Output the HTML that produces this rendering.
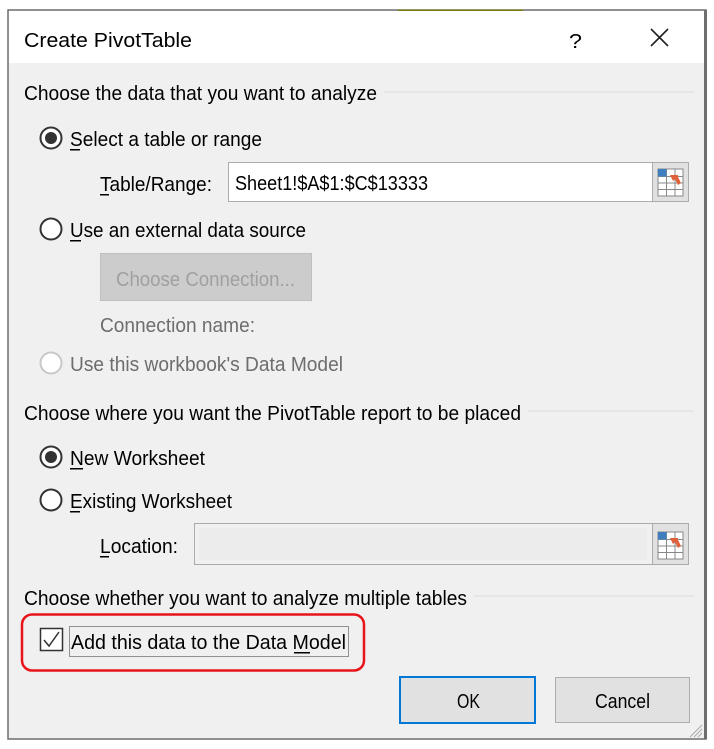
<!DOCTYPE html>
<html><head><meta charset="utf-8"><style>
html,body{margin:0;padding:0;background:#fff;width:714px;height:749px;overflow:hidden}
svg{display:block}
text{font-family:"Liberation Sans",sans-serif;font-size:20px;fill:#000}
</style></head><body>
<svg width="714" height="749" viewBox="0 0 714 749" xmlns="http://www.w3.org/2000/svg">
<rect x="0" y="0" width="714" height="749" fill="#fff"/>
<!-- dialog -->
<rect x="8" y="10" width="698" height="729" fill="#f0f0f0" stroke="#6e6e6e" stroke-width="1.5"/>
<rect x="398" y="9.5" width="125" height="1.5" fill="#7a7a10"/>
<rect x="704" y="10" width="3" height="729" fill="#6e6e6e"/>
<rect x="9" y="11" width="695" height="52" fill="#fff"/>
<text x="24" y="47" font-size="22" textLength="168" lengthAdjust="spacingAndGlyphs">Create PivotTable</text>
<text x="569" y="48" font-size="26" fill="#222" textLength="13" lengthAdjust="spacingAndGlyphs">?</text>
<path d="M651 29 L668 46 M668 29 L651 46" stroke="#222" stroke-width="1.6"/>

<!-- section 1 -->
<text x="24" y="100" textLength="353" lengthAdjust="spacingAndGlyphs">Choose the data that you want to analyze</text>
<line x1="384" y1="92" x2="694" y2="92" stroke="#dcdcdc"/>
<circle cx="51" cy="138" r="10.5" fill="#fff" stroke="#333" stroke-width="2"/>
<circle cx="51" cy="138" r="6" fill="#333"/>
<text x="70" y="146" textLength="192" lengthAdjust="spacingAndGlyphs">Select a table or range</text>
<rect x="70" y="149" width="10" height="1.5" fill="#000"/>
<text x="100" y="191" textLength="112" lengthAdjust="spacingAndGlyphs">Table/Range:</text>
<rect x="100" y="194" width="9" height="1.5" fill="#000"/>
<rect x="228.5" y="162.5" width="424" height="39" fill="#fff" stroke="#acacac"/>
<text x="235" y="190" textLength="193" lengthAdjust="spacingAndGlyphs">Sheet1!$A$1:$C$13333</text>
<g>
<rect x="652.5" y="162.5" width="36" height="39" fill="#e1e1e1" stroke="#acacac"/>
<rect x="658" y="169" width="25" height="27" fill="#fff" stroke="#888"/>
<path d="M658 176.5 H683 M658 183 H683 M658 189.5 H683 M666.5 169 V196 M675 169 V196" stroke="#888" stroke-width="1"/>
<rect x="658" y="169" width="8.5" height="7.5" fill="#3f7fc0"/>
<path d="M670 175 L678 175 L678 177 L681 183 L678 185 L675 179 L673 181 Z" fill="#e0603a"/>
</g>
<circle cx="51" cy="229" r="10.5" fill="#fff" stroke="#333" stroke-width="2"/>
<text x="70" y="237" textLength="236" lengthAdjust="spacingAndGlyphs">Use an external data source</text>
<rect x="70" y="240" width="11" height="1.5" fill="#000"/>
<rect x="100.5" y="253.5" width="211" height="47" fill="#cccccc" stroke="#bfbfbf"/>
<text x="116" y="286" textLength="179" lengthAdjust="spacingAndGlyphs" style="fill:#a0a0a0">Choose Connection...</text>
<text x="100" y="332" textLength="155" lengthAdjust="spacingAndGlyphs" style="fill:#6d6d6d">Connection name:</text>
<circle cx="51" cy="363" r="10.5" fill="#fff" stroke="#c8c8c8" stroke-width="2"/>
<text x="70" y="371" textLength="273" lengthAdjust="spacingAndGlyphs" style="fill:#6d6d6d">Use this workbook's Data Model</text>

<!-- section 2 -->
<text x="24" y="420" textLength="497" lengthAdjust="spacingAndGlyphs">Choose where you want the PivotTable report to be placed</text>
<line x1="528" y1="411" x2="694" y2="411" stroke="#dcdcdc"/>
<circle cx="51" cy="457" r="10.5" fill="#fff" stroke="#333" stroke-width="2"/>
<circle cx="51" cy="457" r="6" fill="#333"/>
<text x="70" y="465" textLength="135" lengthAdjust="spacingAndGlyphs">New Worksheet</text>
<rect x="70" y="468" width="13" height="1.5" fill="#000"/>
<circle cx="51" cy="500" r="10.5" fill="#fff" stroke="#333" stroke-width="2"/>
<text x="70" y="508" textLength="162" lengthAdjust="spacingAndGlyphs">Existing Worksheet</text>
<rect x="70" y="511" width="10" height="1.5" fill="#000"/>
<text x="100" y="553" textLength="78" lengthAdjust="spacingAndGlyphs">Location:</text>
<rect x="100" y="556" width="9" height="1.5" fill="#000"/>
<rect x="194.5" y="523.5" width="458" height="41" fill="#f0f0f0" stroke="#acacac"/>
<rect x="199" y="528" width="448" height="32" fill="#ececec"/>
<g transform="translate(0,363)">
<rect x="652.5" y="160.5" width="36" height="41" fill="#e1e1e1" stroke="#acacac"/>
<rect x="658" y="169" width="25" height="27" fill="#fff" stroke="#888"/>
<path d="M658 176.5 H683 M658 183 H683 M658 189.5 H683 M666.5 169 V196 M675 169 V196" stroke="#888" stroke-width="1"/>
<rect x="658" y="169" width="8.5" height="7.5" fill="#3f7fc0"/>
<path d="M670 175 L678 175 L678 177 L681 183 L678 185 L675 179 L673 181 Z" fill="#e0603a"/>
</g>

<!-- section 3 -->
<text x="24" y="605" textLength="443" lengthAdjust="spacingAndGlyphs">Choose whether you want to analyze multiple tables</text>
<line x1="474" y1="596" x2="694" y2="596" stroke="#dcdcdc"/>
<rect x="22" y="614.5" width="342" height="56" rx="10" fill="none" stroke="#e8141a" stroke-width="2.5"/>
<rect x="40.5" y="628.5" width="22" height="22" fill="#fff" stroke="#333" stroke-width="1.5"/>
<path d="M44 640 L49 646 L59 632" fill="none" stroke="#333" stroke-width="1.5"/>
<rect x="69.5" y="626.5" width="279" height="30" fill="none" stroke="#333" stroke-width="1" stroke-dasharray="1 1"/>
<text x="71" y="649" textLength="275" lengthAdjust="spacingAndGlyphs">Add this data to the Data Model</text>
<rect x="294" y="652" width="16" height="1.5" fill="#000"/>

<!-- buttons -->
<rect x="400" y="677" width="135" height="46" fill="#e1e1e1" stroke="#0078d7" stroke-width="2"/>
<text x="457" y="708" textLength="23" lengthAdjust="spacingAndGlyphs">OK</text>
<rect x="555.5" y="677.5" width="134" height="45" fill="#e1e1e1" stroke="#adadad"/>
<text x="595" y="708" textLength="55" lengthAdjust="spacingAndGlyphs">Cancel</text>
<path d="M702 725 L690 737 M702 729 L694 737 M702 733 L698 737" stroke="#aaa" stroke-width="1"/>
</svg>
</body></html>
